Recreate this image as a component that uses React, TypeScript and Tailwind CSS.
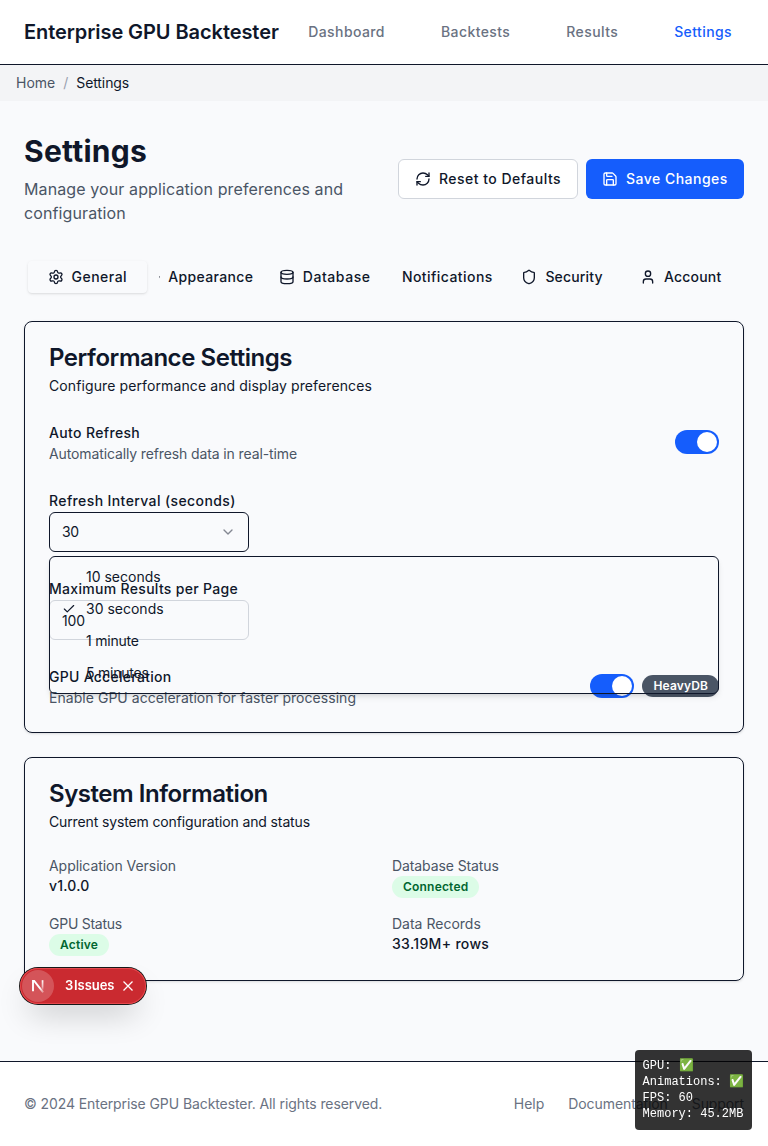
import type { ReactNode } from "react";
import {
  Bell,
  Check,
  ChevronDown,
  Database,
  Palette,
  RefreshCw,
  Save,
  Settings,
  Shield,
  User,
} from "lucide-react";

const tabs = [
  { label: "General", Icon: Settings, spacing: "tracking-[0.48px] shadow-sm" },
  { label: "Appearance", Icon: Palette, spacing: "tracking-[0.35px]" },
  { label: "Database", Icon: Database, spacing: "tracking-[0.55px]" },
  { label: "Notifications", Icon: Bell, spacing: "tracking-[0.44px]" },
  { label: "Security", Icon: Shield, spacing: "tracking-[0.15px]" },
  { label: "Account", Icon: User, spacing: "tracking-[0.2px]" },
];

const intervals = [
  { label: "10 seconds", spacing: "tracking-normal" },
  { label: "30 seconds", spacing: "tracking-normal" },
  { label: "1 minute", spacing: "tracking-[-0.22px]" },
  { label: "5 minutes", spacing: "tracking-[-0.22px]" },
];

function Card({
  title,
  description,
  spacing,
  children,
}: {
  title: string;
  description: string;
  spacing: string;
  children: ReactNode;
}) {
  return (
    <section className="rounded-lg border border-[#0f172a] p-6 shadow-sm">
      <h2 className="text-2xl leading-none font-semibold tracking-[-0.45px]">{title}</h2>
      <p className={`mt-1.5 mb-6 text-sm ${spacing}`}>{description}</p>
      {children}
    </section>
  );
}

function Toggle() {
  return (
    <button className="flex h-6 w-11 shrink-0 items-center justify-end rounded-full bg-[#155dfc] p-0.5" aria-label="Toggle">
      <span className="h-5 w-5 rounded-full bg-white" />
    </button>
  );
}

function Label({ children, spacing = "tracking-[0.35px]" }: { children: ReactNode; spacing?: string }) {
  return <div className={`h-6 text-sm leading-[25px] font-medium ${spacing}`}>{children}</div>;
}

function Badge({ children }: { children: ReactNode }) {
  return (
    <span className="flex h-[22px] w-fit items-center rounded-full border border-transparent bg-[#dcfce7] px-2.5 text-xs font-semibold tracking-[0.2px] text-[#016630]">
      {children}
    </span>
  );
}

function IssueIndicator() {
  return (
    <div className="fixed top-[968px] left-5 flex h-9 w-[126px] items-center rounded-full bg-[#ca2a30] text-white shadow-[0_0_0_1px_#171717,inset_0_0_0_1px_#e5484d,0_16px_32px_-8px_rgba(0,0,0,0.24)]">
      <span className="ml-0.5 flex h-8 w-8 items-center justify-center rounded-full bg-white/20">
        <svg width="14" height="14" viewBox="0 0 14 14" fill="none">
          <defs>
            <linearGradient id="stem" x1="0" y1="1" x2="0" y2="12" gradientUnits="userSpaceOnUse">
              <stop stopColor="white" />
              <stop offset="0.6" stopColor="white" stopOpacity="0.6" />
              <stop offset="1" stopColor="white" stopOpacity="0" />
            </linearGradient>
            <linearGradient id="diag" x1="3" y1="2" x2="12" y2="14" gradientUnits="userSpaceOnUse">
              <stop offset="0.6" stopColor="white" />
              <stop offset="1" stopColor="white" stopOpacity="0.3" />
            </linearGradient>
          </defs>
          <path d="M2 12.2V2h1.2l9 11.4" stroke="url(#diag)" strokeWidth="1.9" />
          <path d="M10.7 1.2h1.7v9.6h-1.7z" fill="url(#stem)" />
        </svg>
      </span>
      <span className="ml-[11px] text-[13px] font-semibold tracking-[-0.05px] whitespace-nowrap [word-spacing:-2.4px]">
        3 Issues
      </span>
      <svg className="ml-auto mr-3" width="12" height="12" viewBox="0 0 12 12" fill="none" stroke="white" strokeWidth="1.3">
        <path d="M1.5 1.5l9 9M10.5 1.5l-9 9" />
      </svg>
    </div>
  );
}

export default function App() {
  return (
    <div className="flex min-h-[1146px] flex-col bg-[#f9fafc] font-['Inter',sans-serif] text-[#0f172a]">
      <header className="flex h-[65px] items-center justify-between border-b border-[#0f172a] bg-white px-6">
        <div className="text-xl font-semibold tracking-[-0.07px] whitespace-nowrap">Enterprise GPU Backtester</div>
        <nav className="flex gap-8 text-sm font-medium tracking-[0.41px] text-[#6a7282]">
          <a className="px-3">Dashboard</a>
          <a className="px-3">Backtests</a>
          <a className="px-3">Results</a>
          <a className="px-3 text-[#155dfc]">Settings</a>
        </nav>
      </header>

      <div className="flex h-9 items-center gap-2 bg-[#f3f4f6] px-4 text-sm">
        <span className="text-[#4a5565]">Home</span>
        <span className="text-[#99a1af]">/</span>
        <span className="tracking-[-0.1px]">Settings</span>
      </div>

      <main className="grow px-6 pt-8">
        <div className="flex items-center justify-between">
          <div>
            <h1 className="text-3xl font-bold tracking-[0.25px]">Settings</h1>
            <p className="mt-2 text-base tracking-[0.11px] text-[#4a5565]">
              Manage your application preferences and configuration
            </p>
          </div>
          <div className="flex shrink-0 gap-2 text-sm font-medium tracking-[0.48px]">
            <button className="flex h-10 w-[180px] items-center gap-2 rounded-md border border-[#d1d5dc] bg-white px-4 whitespace-nowrap">
              <RefreshCw size={16} className="shrink-0" />
              Reset to Defaults
            </button>
            <button className="flex h-10 w-[158px] items-center gap-2 rounded-md bg-[#155dfc] px-4 whitespace-nowrap text-white">
              <Save size={16} className="shrink-0" />
              Save Changes
            </button>
          </div>
        </div>

        <div className="mt-8 grid h-10 grid-cols-6 rounded-md p-1 text-sm font-medium">
          {tabs.map(({ label, Icon, spacing }) => (
            <button key={label} className={`flex min-w-0 items-center justify-center rounded-sm px-3 ${spacing}`}>
              <Icon className="mr-2 h-4 w-4 min-w-0" />
              {label}
            </button>
          ))}
        </div>

        <div className="mt-6 space-y-6">
          <Card
            title="Performance Settings"
            description="Configure performance and display preferences"
            spacing="tracking-[0.11px]"
          >
            <div className="space-y-6">
              <div className="flex items-center justify-between">
                <div>
                  <Label>Auto Refresh</Label>
                  <p className="text-sm tracking-[-0.12px] text-[#4a5565]">Automatically refresh data in real-time</p>
                </div>
                <Toggle />
              </div>

              <div className="relative">
                <Label spacing="tracking-[0.39px]">Refresh Interval (seconds)</Label>
                <button className="flex h-10 w-[200px] items-center justify-between rounded-md border border-[#0f172a] px-3 text-sm tracking-[-0.3px]">
                  30
                  <ChevronDown size={16} className="opacity-50" />
                </button>
                <div className="absolute top-[68px] left-0 z-10 w-full rounded-md border border-[#0f172a] p-1 shadow-md">
                  {intervals.map(({ label, spacing }) => (
                    <div key={label} className={`flex h-8 items-center pl-2 text-sm ${spacing}`}>
                      <span className="mr-2.5 flex w-3.5">{label === "30 seconds" && <Check size={14} />}</span>
                      {label}
                    </div>
                  ))}
                </div>
              </div>

              <div>
                <Label spacing="tracking-[0.31px]">Maximum Results per Page</Label>
                <div className="flex h-10 w-[200px] items-center rounded-md border border-[#d1d5dc] px-3 pt-0.5 text-sm tracking-[-0.1px]">
                  100
                </div>
              </div>

              <div className="flex items-center justify-between">
                <div>
                  <Label spacing="tracking-[0.28px]">GPU Acceleration</Label>
                  <p className="text-sm tracking-[0.04px] text-[#4a5565]">Enable GPU acceleration for faster processing</p>
                </div>
                <div className="flex items-center gap-2">
                  <Toggle />
                  <span className="flex h-[22px] items-center rounded-full border border-transparent bg-[#4a5565] px-2.5 text-xs font-semibold tracking-[0.14px] text-white">
                    HeavyDB
                  </span>
                </div>
              </div>
            </div>
          </Card>

          <Card
            title="System Information"
            description="Current system configuration and status"
            spacing="tracking-[-0.13px]"
          >
            <div className="grid grid-cols-2 gap-4 text-sm">
              <div>
                <p className="tracking-[-0.05px] text-[#4a5565]">Application Version</p>
                <p className="font-medium tracking-[0.2px]">v1.0.0</p>
              </div>
              <div>
                <p className="tracking-[-0.1px] text-[#4a5565]">Database Status</p>
                <Badge>Connected</Badge>
              </div>
              <div>
                <p className="tracking-[-0.25px] text-[#4a5565]">GPU Status</p>
                <Badge>Active</Badge>
              </div>
              <div>
                <p className="text-[#4a5565]">Data Records</p>
                <p className="font-medium tracking-[0.33px]">33.19M+ rows</p>
              </div>
            </div>
          </Card>
        </div>
      </main>

      <footer className="flex h-[85px] items-center justify-between border-t border-[#0f172a] bg-white px-6 text-sm tracking-[-0.09px] text-[#6a7282]">
        <span>© 2024 Enterprise GPU Backtester. All rights reserved.</span>
        <div className="flex gap-6">
          <a className="tracking-normal">Help</a>
          <a>Documentation</a>
          <a>Support</a>
        </div>
      </footer>

      <IssueIndicator />

      <div className="fixed right-4 bottom-4 z-20 rounded bg-black/80 p-2 font-['Liberation_Mono',monospace] text-xs text-white">
        <div className="h-4">GPU: ✅</div>
        <div className="h-4">Animations: ✅</div>
        <div className="h-4">FPS: 60</div>
        <div className="h-4">Memory: 45.2MB</div>
      </div>
    </div>
  );
}
